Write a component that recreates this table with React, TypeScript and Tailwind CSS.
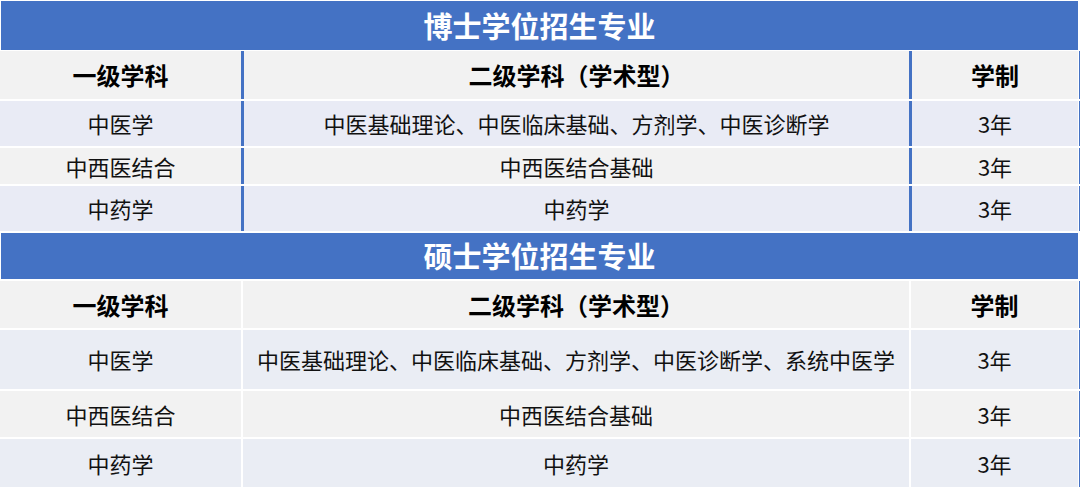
import React from "react";

type Row = { a: string; b: string; c: string; h: string; bg: string };

const font = { fontFamily: '"Noto Sans CJK SC", "Noto Sans", sans-serif' };

const phdRows: Row[] = [
  { a: "中医学", b: "中医基础理论、中医临床基础、方剂学、中医诊断学", c: "3年", h: "h-[45px]", bg: "bg-[#E9EBF5]" },
  { a: "中西医结合", b: "中西医结合基础", c: "3年", h: "h-[36px]", bg: "bg-[#F2F2F2]" },
  { a: "中药学", b: "中药学", c: "3年", h: "h-[45px]", bg: "bg-[#E9EBF5]" },
];

const masterRows: Row[] = [
  { a: "中医学", b: "中医基础理论、中医临床基础、方剂学、中医诊断学、系统中医学", c: "3年", h: "h-[59px]", bg: "bg-[#EAEDF4]" },
  { a: "中西医结合", b: "中西医结合基础", c: "3年", h: "h-[46px]", bg: "bg-[#F2F2F2]" },
  { a: "中药学", b: "中药学", c: "3年", h: "h-[48px]", bg: "bg-[#EAEDF4]" },
];

function Title({ text, h }: { text: string; h: string }) {
  return (
    <div
      className={`${h} ml-[1px] mr-[2px] bg-[#4472C4] flex items-center justify-center text-white text-[29px] font-bold`}
    >
      {text}
    </div>
  );
}

function TableRow({
  a,
  b,
  c,
  h,
  bg,
  bold,
  blueLines,
}: {
  a: string;
  b: string;
  c: string;
  h: string;
  bg: string;
  bold?: boolean;
  blueLines: boolean;
}) {
  const sep = blueLines
    ? "border-l-[3px] border-[#4472C4]"
    : "border-l-[2px] border-white";
  const txt = bold
    ? "text-[24px] font-bold text-black"
    : "text-[22px] text-[#111111]";
  return (
    <div className={`${h} flex pr-[1px] border-r-[1px] border-[#4472C4]`}>
      <div className={`w-[241px] ${bg} flex items-center justify-center ${txt}`}>{a}</div>
      <div className={`w-[668px] ${sep} ${bg} flex items-center justify-center ${txt}`}>{b}</div>
      <div className={`flex-1 ${sep} ${bg} flex items-center justify-center ${txt}`}>{c}</div>
    </div>
  );
}

export default function App() {
  return (
    <div className="w-[1080px] h-[487px] bg-white overflow-hidden pt-[1px]" style={font}>
      <Title text="博士学位招生专业" h="h-[49px]" />
      <div className="flex flex-col gap-[2px] mt-[1px]">
        <TableRow
          a="一级学科"
          b="二级学科（学术型）"
          c="学制"
          h="h-[48px]"
          bg="bg-[#F2F2F2]"
          bold
          blueLines
        />
        {phdRows.map((r, i) => (
          <TableRow key={i} {...r} blueLines />
        ))}
        <Title text="硕士学位招生专业" h="h-[46px]" />
        <TableRow
          a="一级学科"
          b="二级学科（学术型）"
          c="学制"
          h="h-[47px]"
          bg="bg-[#F2F2F2]"
          bold
          blueLines={false}
        />
        {masterRows.map((r, i) => (
          <TableRow key={i} {...r} blueLines={false} />
        ))}
      </div>
    </div>
  );
}
